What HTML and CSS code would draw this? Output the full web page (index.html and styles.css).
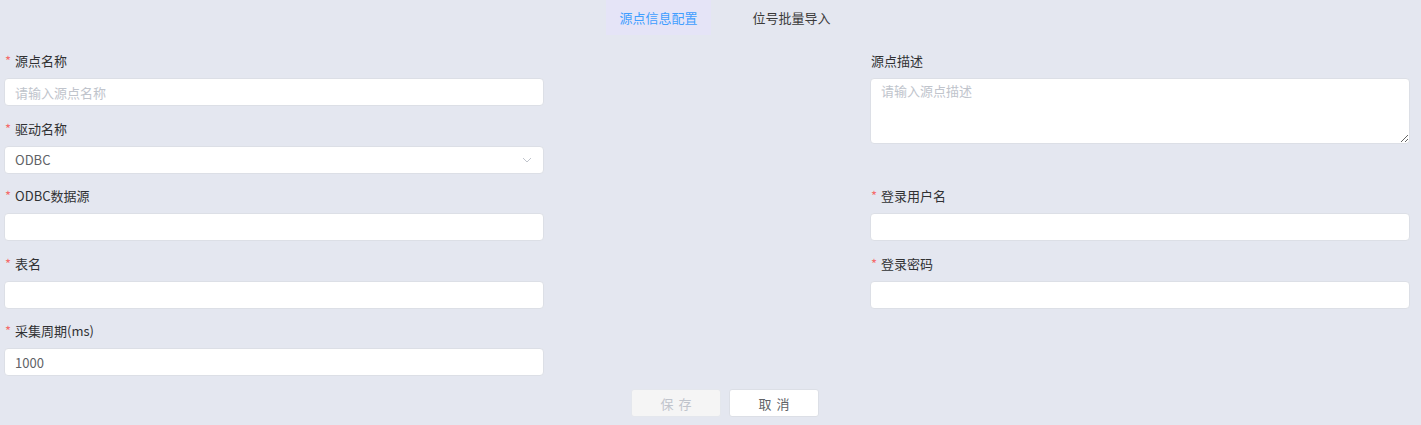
FILE: index.html
```html
<!DOCTYPE html>
<html lang="zh-CN">
<head>
<meta charset="utf-8">
<title>源点信息配置</title>
<link rel="stylesheet" href="styles.css">
</head>
<body>
<div class="page">
  <div class="tabs">
    <div class="tab active">源点信息配置</div>
    <div class="tab">位号批量导入</div>
  </div>
  <form class="form">
    <div class="row">
      <div class="col">
        <div class="item">
          <label class="label req">源点名称</label>
          <input class="input" type="text" placeholder="请输入源点名称">
        </div>
        <div class="item">
          <label class="label req">驱动名称</label>
          <div class="select">
            <input class="input" type="text" value="ODBC" readonly>
            <svg class="arrow" width="10" height="6" viewBox="0 0 10 6"><path d="M1 1 L5 5 L9 1" fill="none" stroke="#c0c4cc" stroke-width="1"/></svg>
          </div>
        </div>
      </div>
      <div class="col">
        <div class="item">
          <label class="label">源点描述</label>
          <textarea class="textarea" placeholder="请输入源点描述"></textarea>
        </div>
      </div>
    </div>
    <div class="row">
      <div class="col">
        <div class="item">
          <label class="label req">ODBC数据源</label>
          <input class="input" type="text">
        </div>
      </div>
      <div class="col">
        <div class="item">
          <label class="label req">登录用户名</label>
          <input class="input" type="text">
        </div>
      </div>
    </div>
    <div class="row">
      <div class="col">
        <div class="item">
          <label class="label req">表名</label>
          <input class="input" type="text">
        </div>
      </div>
      <div class="col">
        <div class="item">
          <label class="label req">登录密码</label>
          <input class="input" type="password">
        </div>
      </div>
    </div>
    <div class="row">
      <div class="col">
        <div class="item last">
          <label class="label req">采集周期(ms)</label>
          <input class="input" type="text" value="1000">
        </div>
      </div>
      <div class="col"></div>
    </div>
  </form>
  <div class="actions">
    <button class="btn disabled" type="button" disabled>保存</button>
    <button class="btn" type="button">取消</button>
  </div>
</div>
</body>
</html>
```

FILE: styles.css
```css
* { box-sizing: border-box; }
html, body {
  margin: 0;
  padding: 0;
  background: #e4e7f0;
  font-family: "Noto Sans CJK SC", "Noto Sans", sans-serif;
  font-size: 13px;
  color: #303133;
}
.page {
  width: 1421px;
  height: 425px;
  overflow: hidden;
}
.tabs {
  display: flex;
  justify-content: center;
  padding-left: 29px;
  gap: 28px;
  height: 35px;
}
.tab {
  width: 105px;
  height: 35px;
  line-height: 35px;
  text-align: center;
  color: #3a3a3a;
  font-size: 13px;
}
.tab.active {
  background: #e5e4f7;
  color: #409eff;
}
.form {
  padding: 16px 11px 0 4px;
  margin: 0;
}
.row {
  display: flex;
  justify-content: space-between;
}
.col {
  width: 540px;
}
.item {
  margin-bottom: 12.5px;
}
.item.last {
  margin-bottom: 0;
}
.label {
  display: block;
  height: 20px;
  line-height: 20px;
  margin-bottom: 7px;
  padding-left: 1px;
  color: #303133;
  font-size: 13px;
}
.label.req::before {
  content: "*";
  color: #f56c6c;
  margin-right: 4px;
}
.input {
  display: block;
  width: 100%;
  height: 28px;
  padding: 0 10px;
  border: 1px solid #dcdfe6;
  border-radius: 4px;
  background: #fff;
  font-family: inherit;
  font-size: 13px;
  color: #606266;
  outline: none;
}
.input::placeholder,
.textarea::placeholder {
  color: #c0c4cc;
}
.select {
  position: relative;
}
.arrow {
  position: absolute;
  right: 12px;
  top: 11px;
}
.textarea {
  display: block;
  width: 100%;
  height: 66px;
  padding: 2px 10px;
  border: 1px solid #dcdfe6;
  border-radius: 4px;
  background: #fff;
  font-family: inherit;
  font-size: 13px;
  line-height: 20px;
  color: #606266;
  outline: none;
  resize: vertical;
}
.actions {
  display: flex;
  justify-content: center;
  gap: 8px;
  padding-left: 29px;
  margin-top: 13px;
}
.btn {
  width: 90px;
  height: 28px;
  border: 1px solid #dcdfe6;
  border-radius: 3px;
  background: #fff;
  color: #606266;
  font-family: inherit;
  font-size: 13px;
  letter-spacing: 5px;
  padding: 0 0 0 5px;
}
.btn.disabled {
  background: #f5f5f5;
  border-color: #e4e7ed;
  color: #c0c4cc;
}
```
